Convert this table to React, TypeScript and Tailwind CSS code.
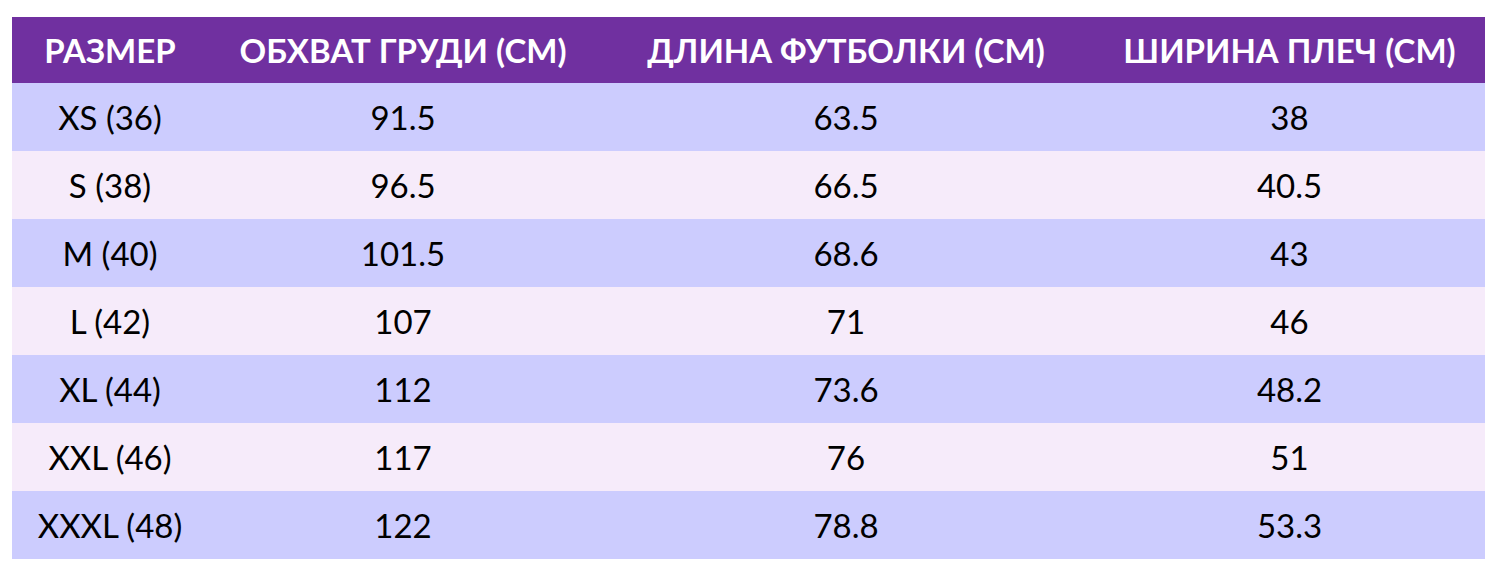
const headers = ['РАЗМЕР', 'ОБХВАТ ГРУДИ (СМ)', 'ДЛИНА ФУТБОЛКИ (СМ)', 'ШИРИНА ПЛЕЧ (СМ)'];

const rows = [
  ['XS (36)', '91.5', '63.5', '38'],
  ['S (38)', '96.5', '66.5', '40.5'],
  ['M (40)', '101.5', '68.6', '43'],
  ['L (42)', '107', '71', '46'],
  ['XL (44)', '112', '73.6', '48.2'],
  ['XXL (46)', '117', '76', '51'],
  ['XXXL (48)', '122', '78.8', '53.3'],
];

const font = { fontFamily: 'Lato, "Open Sans", sans-serif' };

export default function App() {
  return (
    <div className="h-[575px] w-[1500px] bg-white pl-[12px] pt-[17px]" style={font}>
      <div className="w-[1473px]">
        <div className="grid h-[66px] grid-cols-[196px_390px_496px_391px] items-center bg-[#7030a0] text-[33px] font-bold text-white">
          {headers.map((h) => (
            <div key={h} className="text-center leading-none">{h}</div>
          ))}
        </div>
        {rows.map((row, i) => (
          <div
            key={row[0]}
            className={`grid h-[68px] grid-cols-[196px_390px_496px_391px] items-center text-[33px] text-black ${i % 2 === 0 ? 'bg-[#ccccfe]' : 'bg-[#f6ebfa]'}`}
          >
            {row.map((cell, j) => (
              <div key={j} className="text-center leading-none">{cell}</div>
            ))}
          </div>
        ))}
      </div>
    </div>
  );
}
